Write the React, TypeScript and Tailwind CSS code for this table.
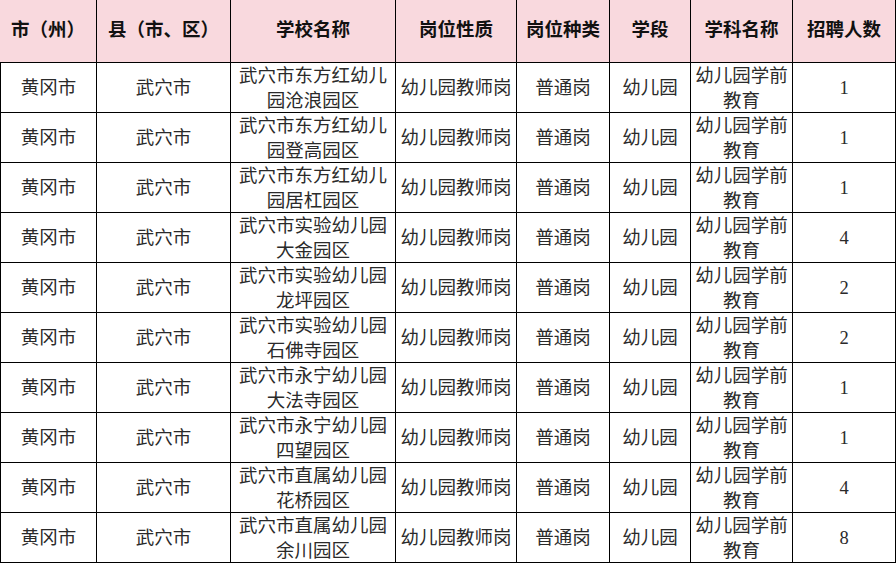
import React from "react";

const rows: [string, string, string, string, string, string, string, string][] = [
  ["黄冈市", "武穴市", "武穴市东方红幼儿园沧浪园区", "幼儿园教师岗", "普通岗", "幼儿园", "幼儿园学前教育", "1"],
  ["黄冈市", "武穴市", "武穴市东方红幼儿园登高园区", "幼儿园教师岗", "普通岗", "幼儿园", "幼儿园学前教育", "1"],
  ["黄冈市", "武穴市", "武穴市东方红幼儿园居杠园区", "幼儿园教师岗", "普通岗", "幼儿园", "幼儿园学前教育", "1"],
  ["黄冈市", "武穴市", "武穴市实验幼儿园大金园区", "幼儿园教师岗", "普通岗", "幼儿园", "幼儿园学前教育", "4"],
  ["黄冈市", "武穴市", "武穴市实验幼儿园龙坪园区", "幼儿园教师岗", "普通岗", "幼儿园", "幼儿园学前教育", "2"],
  ["黄冈市", "武穴市", "武穴市实验幼儿园石佛寺园区", "幼儿园教师岗", "普通岗", "幼儿园", "幼儿园学前教育", "2"],
  ["黄冈市", "武穴市", "武穴市永宁幼儿园大法寺园区", "幼儿园教师岗", "普通岗", "幼儿园", "幼儿园学前教育", "1"],
  ["黄冈市", "武穴市", "武穴市永宁幼儿园四望园区", "幼儿园教师岗", "普通岗", "幼儿园", "幼儿园学前教育", "1"],
  ["黄冈市", "武穴市", "武穴市直属幼儿园花桥园区", "幼儿园教师岗", "普通岗", "幼儿园", "幼儿园学前教育", "4"],
  ["黄冈市", "武穴市", "武穴市直属幼儿园余川园区", "幼儿园教师岗", "普通岗", "幼儿园", "幼儿园学前教育", "8"],
];

const headers = ["市（州）", "县（市、区）", "学校名称", "岗位性质", "岗位种类", "学段", "学科名称", "招聘人数"];

const font = { fontFamily: '"Liberation Serif", "Noto Sans CJK SC", serif' };

export default function App() {
  return (
    <div className="w-[896px] h-[563px] bg-white overflow-hidden" style={font}>
      <div className="flex flex-col gap-px bg-black pr-px pb-px w-[896px]">
        <div className="grid grid-cols-[96px_133px_164px_120px_92px_80px_101px_102px] gap-px h-[62px]">
          {headers.map((h, i) => (
            <div
              key={i}
              className="bg-[#f9d9de] flex items-center justify-center text-[18.5px] font-bold text-[#111] whitespace-nowrap"
            >
              {h}
            </div>
          ))}
        </div>
        {rows.map((r, ri) => (
          <div
            key={ri}
            className="grid grid-cols-[95px_133px_164px_120px_92px_80px_101px_102px] gap-px pl-px h-[49px]"
          >
            {r.map((c, ci) => (
              <div
                key={ci}
                className="bg-white flex items-center justify-center text-center text-[18.5px] leading-[25px] text-[#2a2a2a] px-[3px] pt-[2px] overflow-hidden"
              >
                <span>{c}</span>
              </div>
            ))}
          </div>
        ))}
      </div>
    </div>
  );
}
